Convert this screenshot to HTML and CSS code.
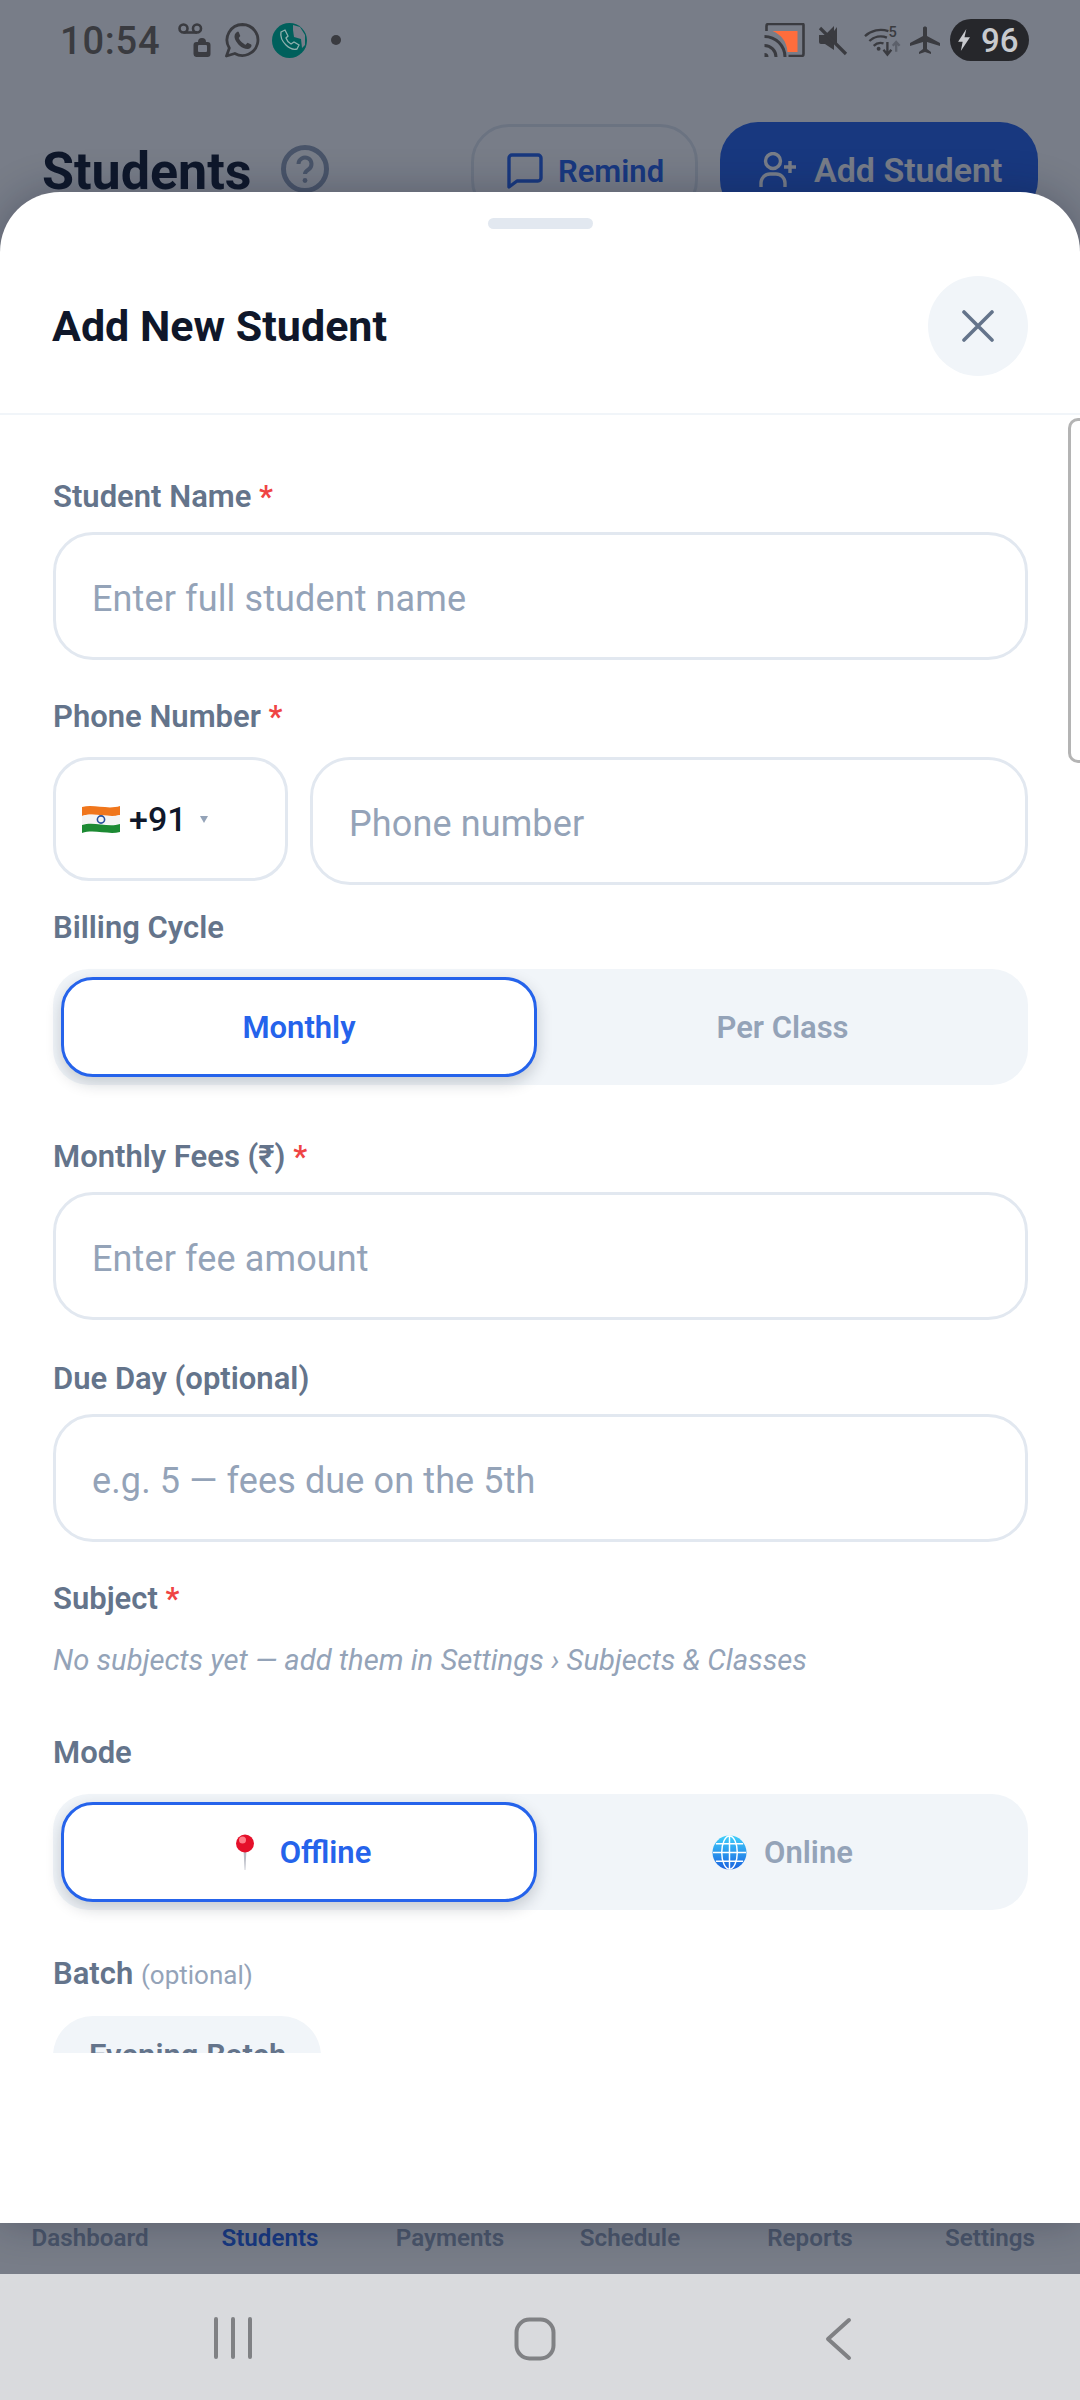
FILE: index.html
```html
<!DOCTYPE html>
<html lang="en">
<head>
<meta charset="utf-8">
<title>Add New Student</title>
<link rel="stylesheet" href="styles.css">
</head>
<body>
<div class="screen">
  <div class="statusbar">
    <div class="status-left">
      <span class="time">10:54</span>
      <svg class="ic-vm" viewBox="0 0 34 34"><circle cx="5.500" cy="5.500" r="4" fill="none" stroke="#3a3b40" stroke-width="2.600"/><circle cx="19" cy="5.500" r="4" fill="none" stroke="#3a3b40" stroke-width="2.600"/><path d="M5.500 9.500h13.500" stroke="#3a3b40" stroke-width="2.600"/><path d="M18 34a3 3 0 0 1-2.500-3V22a3 3 0 0 1 3-3h1.500a4 4 0 0 1 8 0h1.500a3 3 0 0 1 3 3v9a3 3 0 0 1-3 3z" fill="#3a3b40"/><rect x="20" y="22" width="9" height="7" rx="1" fill="#787d89"/></svg>
      <svg class="ic-wa" viewBox="0 0 36 36"><path d="M18.500 2.500a15.500 15.500 0 0 0-13.200 23.600L2.500 34l8.300-2.500A15.500 15.500 0 1 0 18.500 2.500z" fill="none" stroke="#3a3b40" stroke-width="2.800" stroke-linejoin="round"/><path d="M13.500 10c-1 0-3 1.500-3 4.500s3 7 5 9 5.500 3.500 8 3.500 4-2 4-3.500l-.3-1-3.700-1.800-1.800 2c-2-.4-6-4-7-6.700l1.600-2-1.500-3.800c-.2-.4-.5-.7-1.300-.7z" fill="#3a3b40"/></svg>
      <svg class="ic-teal" viewBox="0 0 35 35"><circle cx="17.500" cy="17.500" r="17.500" fill="#00605c"/><path d="M21 2l7 2 5 8 0 10-3 3-1-9-7-2-1-7z" fill="#787d89"/><path d="M9 9l4-2 3 6-2 2c1 3 3 5 5 6l3-2 5 3-2 4c-4 1-8-1-11-4s-6-8-5-13z" fill="#00605c" stroke="#8fb0ae" stroke-width="1.300"/></svg>
      <span class="dot"></span>
    </div>
    <div class="status-right">
      <svg class="ic-cast" viewBox="0 0 40 34"><path d="M2 8V3a2 2 0 0 1 2-2h34a1 1 0 0 1 1 1v29a2 2 0 0 1-2 2H24" fill="none" stroke="#3a3b40" stroke-width="2.600"/><path d="M8 8h25v21H23C22 18 17 12 8 8z" fill="#ff6d3c"/><path d="M0 30a4 4 0 0 1 4 4H0zM0 21a13 13 0 0 1 13 13h-3A10 10 0 0 0 0 24zM0 12a22 22 0 0 1 22 22h-3A19 19 0 0 0 0 15z" fill="#3a3b40"/></svg>
      <svg class="ic-mute" viewBox="0 0 30 32"><path d="M1 11h6l9-9v24l-9-6H3a2 2 0 0 1-2-2z" fill="#3a3b40"/><path d="M19 3v18l-3-3V7z" fill="#3a3b40"/><path d="M2 4l26 26" stroke="#3a3b40" stroke-width="3.200"/></svg>
      <svg class="ic-wifi" viewBox="0 0 40 34"><path d="M1 13a24 24 0 0 1 24-5M5.500 18a17 17 0 0 1 18-3.500M10 23a10 10 0 0 1 10-2.500" fill="none" stroke="#3a3b40" stroke-width="2.400"/><circle cx="15" cy="26" r="2" fill="#3a3b40"/><text class="wifi-five" x="25" y="14">5</text><path d="M24 19v12m-4-4 4 5 4-5" fill="none" stroke="#3a3b40" stroke-width="2.400"/><path d="M33 29V19m-3.500 4 3.500-4 3.500 4" fill="none" stroke="#5c606a" stroke-width="2.400"/></svg>
      <svg class="ic-plane" viewBox="0 0 30 30"><path d="M13 3c0-2 4-2 4 0v8l13 7v3l-13-4v7l4 3v2l-6-2-6 2v-2l4-3v-7L0 21v-3l13-7z" fill="#3a3b40"/></svg>
      <div class="battery">
        <svg class="ic-bolt" viewBox="0 0 14 24"><path d="M9 0L0 14h5l-2 10 10-15H7z" fill="#c8cace"/></svg>
        <span>96</span>
      </div>
    </div>
  </div>

  <header class="app-head">
    <h1 class="app-title">Students</h1>
    <svg class="ic-help" viewBox="0 0 48 48"><circle cx="24" cy="24" r="21.500" fill="none" stroke="#94a3b8" stroke-width="5"/><path d="M17.500 19a6.500 6.500 0 1 1 10 5.500c-2 1.300-3.500 2.500-3.500 4.500" fill="none" stroke="#94a3b8" stroke-width="4"/><circle cx="24" cy="35.500" r="2.400" fill="#94a3b8"/></svg>
    <div class="app-actions">
      <div class="btn btn-ghost">
        <svg class="ic-msg" viewBox="0 0 38 38"><path d="M3 6a3 3 0 0 1 3-3h26a3 3 0 0 1 3 3v20a3 3 0 0 1-3 3H11l-8 6z" fill="none" stroke="#2563eb" stroke-width="3.400" stroke-linejoin="round"/></svg>
        <span>Remind</span>
      </div>
      <div class="btn btn-primary">
        <svg class="ic-add" viewBox="0 0 38 36"><circle cx="14" cy="9" r="7.500" fill="none" stroke="#fff" stroke-width="3.400"/><path d="M2 35v-4a9 9 0 0 1 9-9h6a9 9 0 0 1 9 9v4" fill="none" stroke="#fff" stroke-width="3.400"/><path d="M31 9v12M25 15h12" stroke="#fff" stroke-width="3.400"/></svg>
        <span>Add Student</span>
      </div>
    </div>
  </header>

  <nav class="tabbar">
    <span>Dashboard</span>
    <span class="tab-on">Students</span>
    <span>Payments</span>
    <span>Schedule</span>
    <span>Reports</span>
    <span>Settings</span>
  </nav>

  <div class="scrim"></div>

  <section class="sheet">
    <div class="handle"></div>
    <div class="sheet-head">
      <h2 class="sheet-title">Add New Student</h2>
      <div class="close">
        <svg class="ic-close" viewBox="0 0 32 32"><path d="M2 2l28 28M30 2L2 30" stroke="#64748b" stroke-width="3.600" stroke-linecap="round"/></svg>
      </div>
    </div>
    <div class="sheet-body">
      <div class="label">Student Name <em>*</em></div>
      <div class="input gap-37">Enter full student name</div>

      <div class="label mid">Phone Number <em>*</em></div>
      <div class="phone-row gap-23">
        <div class="country">
          <svg class="flag" viewBox="0 0 38 28"><path d="M0 2c12-3 26 3 38-1v9c-12 3-26-3-38 1z" fill="#f0761c"/><path d="M0 11c12-4 26 3 38-1v9c-12 3-26-3-38 1z" fill="#f4f4f4"/><path d="M0 20c12-4 26 3 38-1v8c-12 3-26-3-38 1z" fill="#1c8a33"/><circle cx="19" cy="14.500" r="3.600" fill="none" stroke="#27509c" stroke-width="1.600"/></svg>
          <span class="code">+91</span>
          <span class="caret"></span>
        </div>
        <div class="input phone">Phone number</div>
      </div>

      <div class="label wide">Billing Cycle</div>
      <div class="seg gap-52">
        <div class="seg-item seg-on">Monthly</div>
        <div class="seg-item">Per Class</div>
      </div>

      <div class="label">Monthly Fees (₹) <em>*</em></div>
      <div class="input gap-39">Enter fee amount</div>

      <div class="label">Due Day (optional)</div>
      <div class="input gap-37">e.g. 5 — fees due on the 5th</div>

      <div class="label">Subject <em>*</em></div>
      <div class="hint">No subjects yet — add them in Settings › Subjects &amp; Classes</div>

      <div class="label wide">Mode</div>
      <div class="seg gap-44">
        <div class="seg-item seg-on">
          <svg class="pin" viewBox="0 0 36 36"><path d="M16.500 16h3L18.300 36h-.6z" fill="#b9bcc6"/><circle cx="18" cy="9.500" r="9" fill="#e5102a"/><circle cx="15.500" cy="6" r="3.500" fill="#ff7d88"/></svg>
          <span>Offline</span>
        </div>
        <div class="seg-item">
          <svg class="globe" viewBox="0 0 36 36"><defs><linearGradient id="globe-fill" x1="0" y1="0" x2="0" y2="1"><stop offset="0" stop-color="#3fd0fb"/><stop offset="1" stop-color="#1a62e0"/></linearGradient></defs><circle cx="18" cy="18" r="17.500" fill="url(#globe-fill)"/><g fill="none" stroke="#fff" stroke-width="1.500"><ellipse cx="18" cy="18" rx="8" ry="17"/><path d="M18 1v34M1 18h34M4 9h28M4 27h28"/></g></svg>
          <span>Online</span>
        </div>
      </div>

      <div class="label wide">Batch <small>(optional)</small></div>
      <div class="chip">Evening Batch</div>
    </div>
    <div class="scroll-tab"></div>
  </section>

  <div class="sysnav">
    <svg class="ic-recents" viewBox="0 0 40 42"><path d="M3 2v38M20 2v38M37 2v38" stroke="#808184" stroke-width="4" stroke-linecap="round"/></svg>
    <svg class="ic-home" viewBox="0 0 42 44"><rect x="2.500" y="2.500" width="37" height="39" rx="13" fill="none" stroke="#808184" stroke-width="4"/></svg>
    <svg class="ic-back" viewBox="0 0 28 44"><path d="M25 3L4 22l21 19" fill="none" stroke="#808184" stroke-width="4" stroke-linecap="round" stroke-linejoin="round"/></svg>
  </div>
</div>
</body>
</html>
```
FILE: styles.css
```css
* { box-sizing: border-box; }
html, body { margin: 0; padding: 0; }
body { width: 1080px; height: 2400px; overflow: hidden; background: #fff; font-family: Roboto, "Liberation Sans", sans-serif; }
.screen { position: relative; width: 1080px; height: 2400px; display: flex; flex-direction: column; overflow: hidden; background: #fff; }

.statusbar { position: relative; z-index: 3; height: 80px; display: flex; justify-content: space-between; align-items: center; padding: 0 51px 0 60px; color: #3a3b40; flex: none; }
.status-left, .status-right { display: flex; align-items: center; }
.time { font-size: 38px; font-weight: 500; width: 118px; letter-spacing: .8px; padding-top: 2px; }
.ic-vm { width: 34px; height: 34px; margin-right: 12px; }
.ic-wa { width: 36px; height: 36px; margin-right: 12px; }
.ic-teal { width: 35px; height: 35px; margin-right: 24px; }
.dot { width: 10px; height: 10px; border-radius: 50%; background: #3a3b40; }
.ic-cast { width: 41px; height: 34px; margin-right: 13px; }
.ic-mute { width: 30px; height: 32px; margin-right: 16px; }
.ic-wifi { width: 39px; height: 34px; margin-right: 7px; overflow: visible; }
.ic-plane { width: 30px; height: 30px; margin-right: 10px; }
.wifi-five { font-size: 15px; font-weight: 500; fill: #3a3b40; }
.battery { width: 79px; height: 42px; border-radius: 21px; background: #26272b; display: flex; align-items: center; padding-left: 7px; gap: 9px; color: #c8cace; font-size: 33px; font-weight: 500; }
.ic-bolt { width: 15px; height: 22px; }

.app-head { flex: none; height: 140px; display: flex; align-items: flex-start; padding: 42px 42px 0 42px; }
.app-title { margin: 22px 0 0; font-size: 52px; line-height: 56px; font-weight: 700; color: #0f172a; }
.ic-help { width: 48px; height: 48px; margin: 23px 0 0 29px; }
.app-actions { margin-left: auto; display: flex; gap: 22px; align-items: flex-start; }
.btn { border-radius: 38px; display: flex; align-items: center; font-weight: 600; }
.btn-ghost { width: 227px; height: 94px; margin-top: 2px; border: 3px solid #e2e8f0; color: #2563eb; background: #fff; padding-left: 32px; gap: 14px; font-size: 31px; }
.btn-primary { width: 318px; height: 96px; background: #2563eb; color: #fff; padding-left: 39px; gap: 17px; font-size: 34px; }
.ic-msg { width: 38px; height: 38px; }
.ic-add { width: 38px; height: 36px; }

.tabbar { flex: none; margin-top: auto; height: 51px; display: grid; grid-template-columns: repeat(6, 180px); justify-items: center; align-content: start; font-size: 24.200px; font-weight: 600; line-height: 30px; color: #94a3b8; }
.tab-on { color: #2563eb; }

.scrim { position: absolute; left: 0; top: 0; width: 1080px; height: 2274px; background: rgba(15, 23, 42, .56); z-index: 1; }

.sysnav { position: relative; z-index: 3; flex: none; height: 126px; background: #d9dadd; }
.sysnav svg { position: absolute; }
.ic-recents { left: 213px; top: 43px; width: 40px; height: 42px; }
.ic-home { left: 514px; top: 43px; width: 42px; height: 44px; }
.ic-back { left: 824px; top: 43px; width: 28px; height: 44px; }

.sheet { position: absolute; z-index: 2; left: 0; top: 192px; width: 1080px; height: 2031px; background: #fff; border-radius: 60px 60px 0 0; box-shadow: 0 0 40px rgba(15, 23, 42, .3); display: flex; flex-direction: column; }
.handle { width: 105px; height: 11px; border-radius: 6px; background: #e2e8f0; margin: 26px auto 0; flex: none; }
.sheet-head { flex: none; height: 186px; border-bottom: 2px solid #f1f5f9; display: flex; justify-content: space-between; padding: 47px 52px 0; }
.sheet-title { margin: 0; font-size: 43px; line-height: 100px; font-weight: 700; color: #0f172a; }
.close { width: 100px; height: 100px; border-radius: 50%; background: #f1f5f9; display: flex; align-items: center; justify-content: center; }
.ic-close { width: 32px; height: 32px; }

.sheet-body { height: 1638px; flex: none; overflow: hidden; padding: 62px 52px 0 53px; }
.label { font-size: 31px; line-height: 40px; font-weight: 600; color: #64748b; margin-bottom: 15px; }
.label.mid { margin-bottom: 20px; }
.label.wide { margin-bottom: 21px; }
.label em { font-style: normal; color: #ef4444; }
.label small { font-size: 26px; font-weight: 400; color: #94a3b8; }
.input { height: 128px; border: 3px solid #e2e8f0; border-radius: 40px; padding: 5px 0 0 36px; display: flex; align-items: center; font-size: 36px; letter-spacing: .12px; color: #94a3b8; background: #fff; }
.gap-23 { margin-bottom: 23px; }
.gap-37 { margin-bottom: 37px; }
.gap-39 { margin-bottom: 39px; }
.gap-44 { margin-bottom: 44px; }
.gap-52 { margin-bottom: 52px; }
.phone-row { display: flex; align-items: flex-start; gap: 22px; }
.country { flex: none; width: 235px; height: 124px; border: 3px solid #e2e8f0; border-radius: 36px; display: flex; align-items: center; padding: 0 0 0 26px; }
.flag { width: 38px; height: 28px; }
.code { margin-left: 9px; font-size: 34px; font-weight: 500; color: #0f172a; }
.caret { margin-left: 13px; width: 0; height: 0; border-left: 4px solid transparent; border-right: 4px solid transparent; border-top: 7px solid #94a3b8; }
.phone { flex: 1; }
.seg { height: 116px; border-radius: 36px; background: #f1f5f9; padding: 8px 0 8px 8px; display: grid; grid-template-columns: 476px 1fr; align-items: start; }
.seg-item { height: 100px; display: flex; align-items: center; justify-content: center; gap: 17px; font-size: 31px; font-weight: 600; color: #94a3b8; }
.seg-on { background: #fff; color: #2563eb; border: 3px solid #2563eb; border-radius: 32px; box-shadow: 0 6px 16px rgba(15, 23, 42, .2); }
.pin { width: 36px; height: 36px; }
.globe { width: 35px; height: 35px; }
.hint { margin: 21px 0 53px; font-size: 29.200px; line-height: 40px; font-style: italic; color: #94a3b8; }
.chip { display: inline-block; height: 80px; padding: 22px 35px 0 36px; border-radius: 40px; background: #f1f5f9; color: #64748b; font-size: 31px; line-height: 36px; font-weight: 600; }
.scroll-tab { position: absolute; right: 0; top: 226px; width: 12px; height: 345px; border: 3px solid #b4b4b4; border-right: 0; border-radius: 10px 0 0 10px; background: #fff; }
```
